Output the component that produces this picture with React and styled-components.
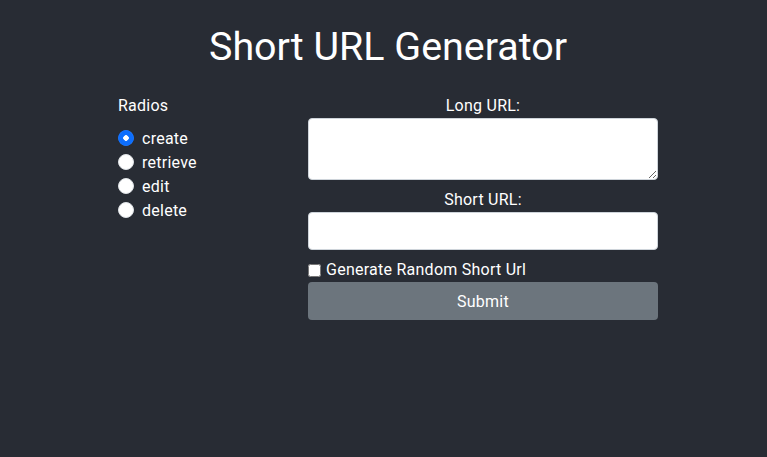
import styled, { createGlobalStyle } from "styled-components";

const GlobalStyle = createGlobalStyle`
  body {
    margin: 0;
    background-color: #282c34;
    font-family: Roboto, "Liberation Sans", sans-serif;
    color: #fff;
  }
`;

const Page = styled.div`
  min-height: 457px;
  padding-left: 9px;
  box-sizing: border-box;
  letter-spacing: 0.25px;
`;

const Title = styled.h1`
  margin: 0;
  padding-top: 23px;
  font-size: 39.4px;
  font-weight: 400;
  line-height: 48px;
  letter-spacing: 0;
  text-align: center;
`;

const Main = styled.div`
  width: 540px;
  margin: 0 auto;
  margin-top: 23px;
  display: flex;
`;

const Side = styled.div`
  width: 190px;
  font-size: 16px;
`;

const SideTitle = styled.div`
  line-height: 24px;
  margin-bottom: 8px;
`;

const RadioRow = styled.label`
  display: flex;
  align-items: center;
  height: 24px;
  gap: 8px;
`;

const Radio = styled.input`
  appearance: none;
  width: 16px;
  height: 16px;
  margin: 0;
  border-radius: 50%;
  background: #fff;
  border: 1px solid #dee2e6;
  box-sizing: border-box;
  &:checked {
    border-color: #0d6efd;
    background-image: radial-gradient(circle, #fff 0 2.5px, #0d6efd 3px);
  }
`;

const Form = styled.div`
  width: 350px;
  display: flex;
  flex-direction: column;
`;

const Label = styled.div`
  text-align: center;
  line-height: 24px;
`;

const TextArea = styled.textarea`
  height: 62px;
  border: 1px solid #ced4da;
  border-radius: 4px;
  box-sizing: border-box;
  margin-bottom: 8px;
  resize: vertical;
`;

const Input = styled.input`
  height: 38px;
  border: 1px solid #ced4da;
  border-radius: 4px;
  box-sizing: border-box;
  margin-bottom: 8px;
`;

const CheckRow = styled.label`
  display: flex;
  align-items: center;
  gap: 5px;
  line-height: 24px;
`;

const Check = styled.input`
  width: 13px;
  height: 13px;
  margin: 0;
`;

const Submit = styled.button`
  height: 38px;
  border: none;
  border-radius: 4px;
  background: #6c757d;
  color: #fff;
  font-family: inherit;
  font-size: 16px;
  letter-spacing: inherit;
`;

export default function App() {
  const ops = ["create", "retrieve", "edit", "delete"];
  return (
    <Page>
      <GlobalStyle />
      <Title>Short URL Generator</Title>
      <Main>
        <Side>
          <SideTitle>Radios</SideTitle>
          {ops.map((o) => (
            <RadioRow key={o}>
              <Radio type="radio" name="op" defaultChecked={o === "create"} />
              {o}
            </RadioRow>
          ))}
        </Side>
        <Form>
          <Label>Long URL:</Label>
          <TextArea />
          <Label>Short URL:</Label>
          <Input />
          <CheckRow>
            <Check type="checkbox" />
            Generate Random Short Url
          </CheckRow>
          <Submit>Submit</Submit>
        </Form>
      </Main>
    </Page>
  );
}
